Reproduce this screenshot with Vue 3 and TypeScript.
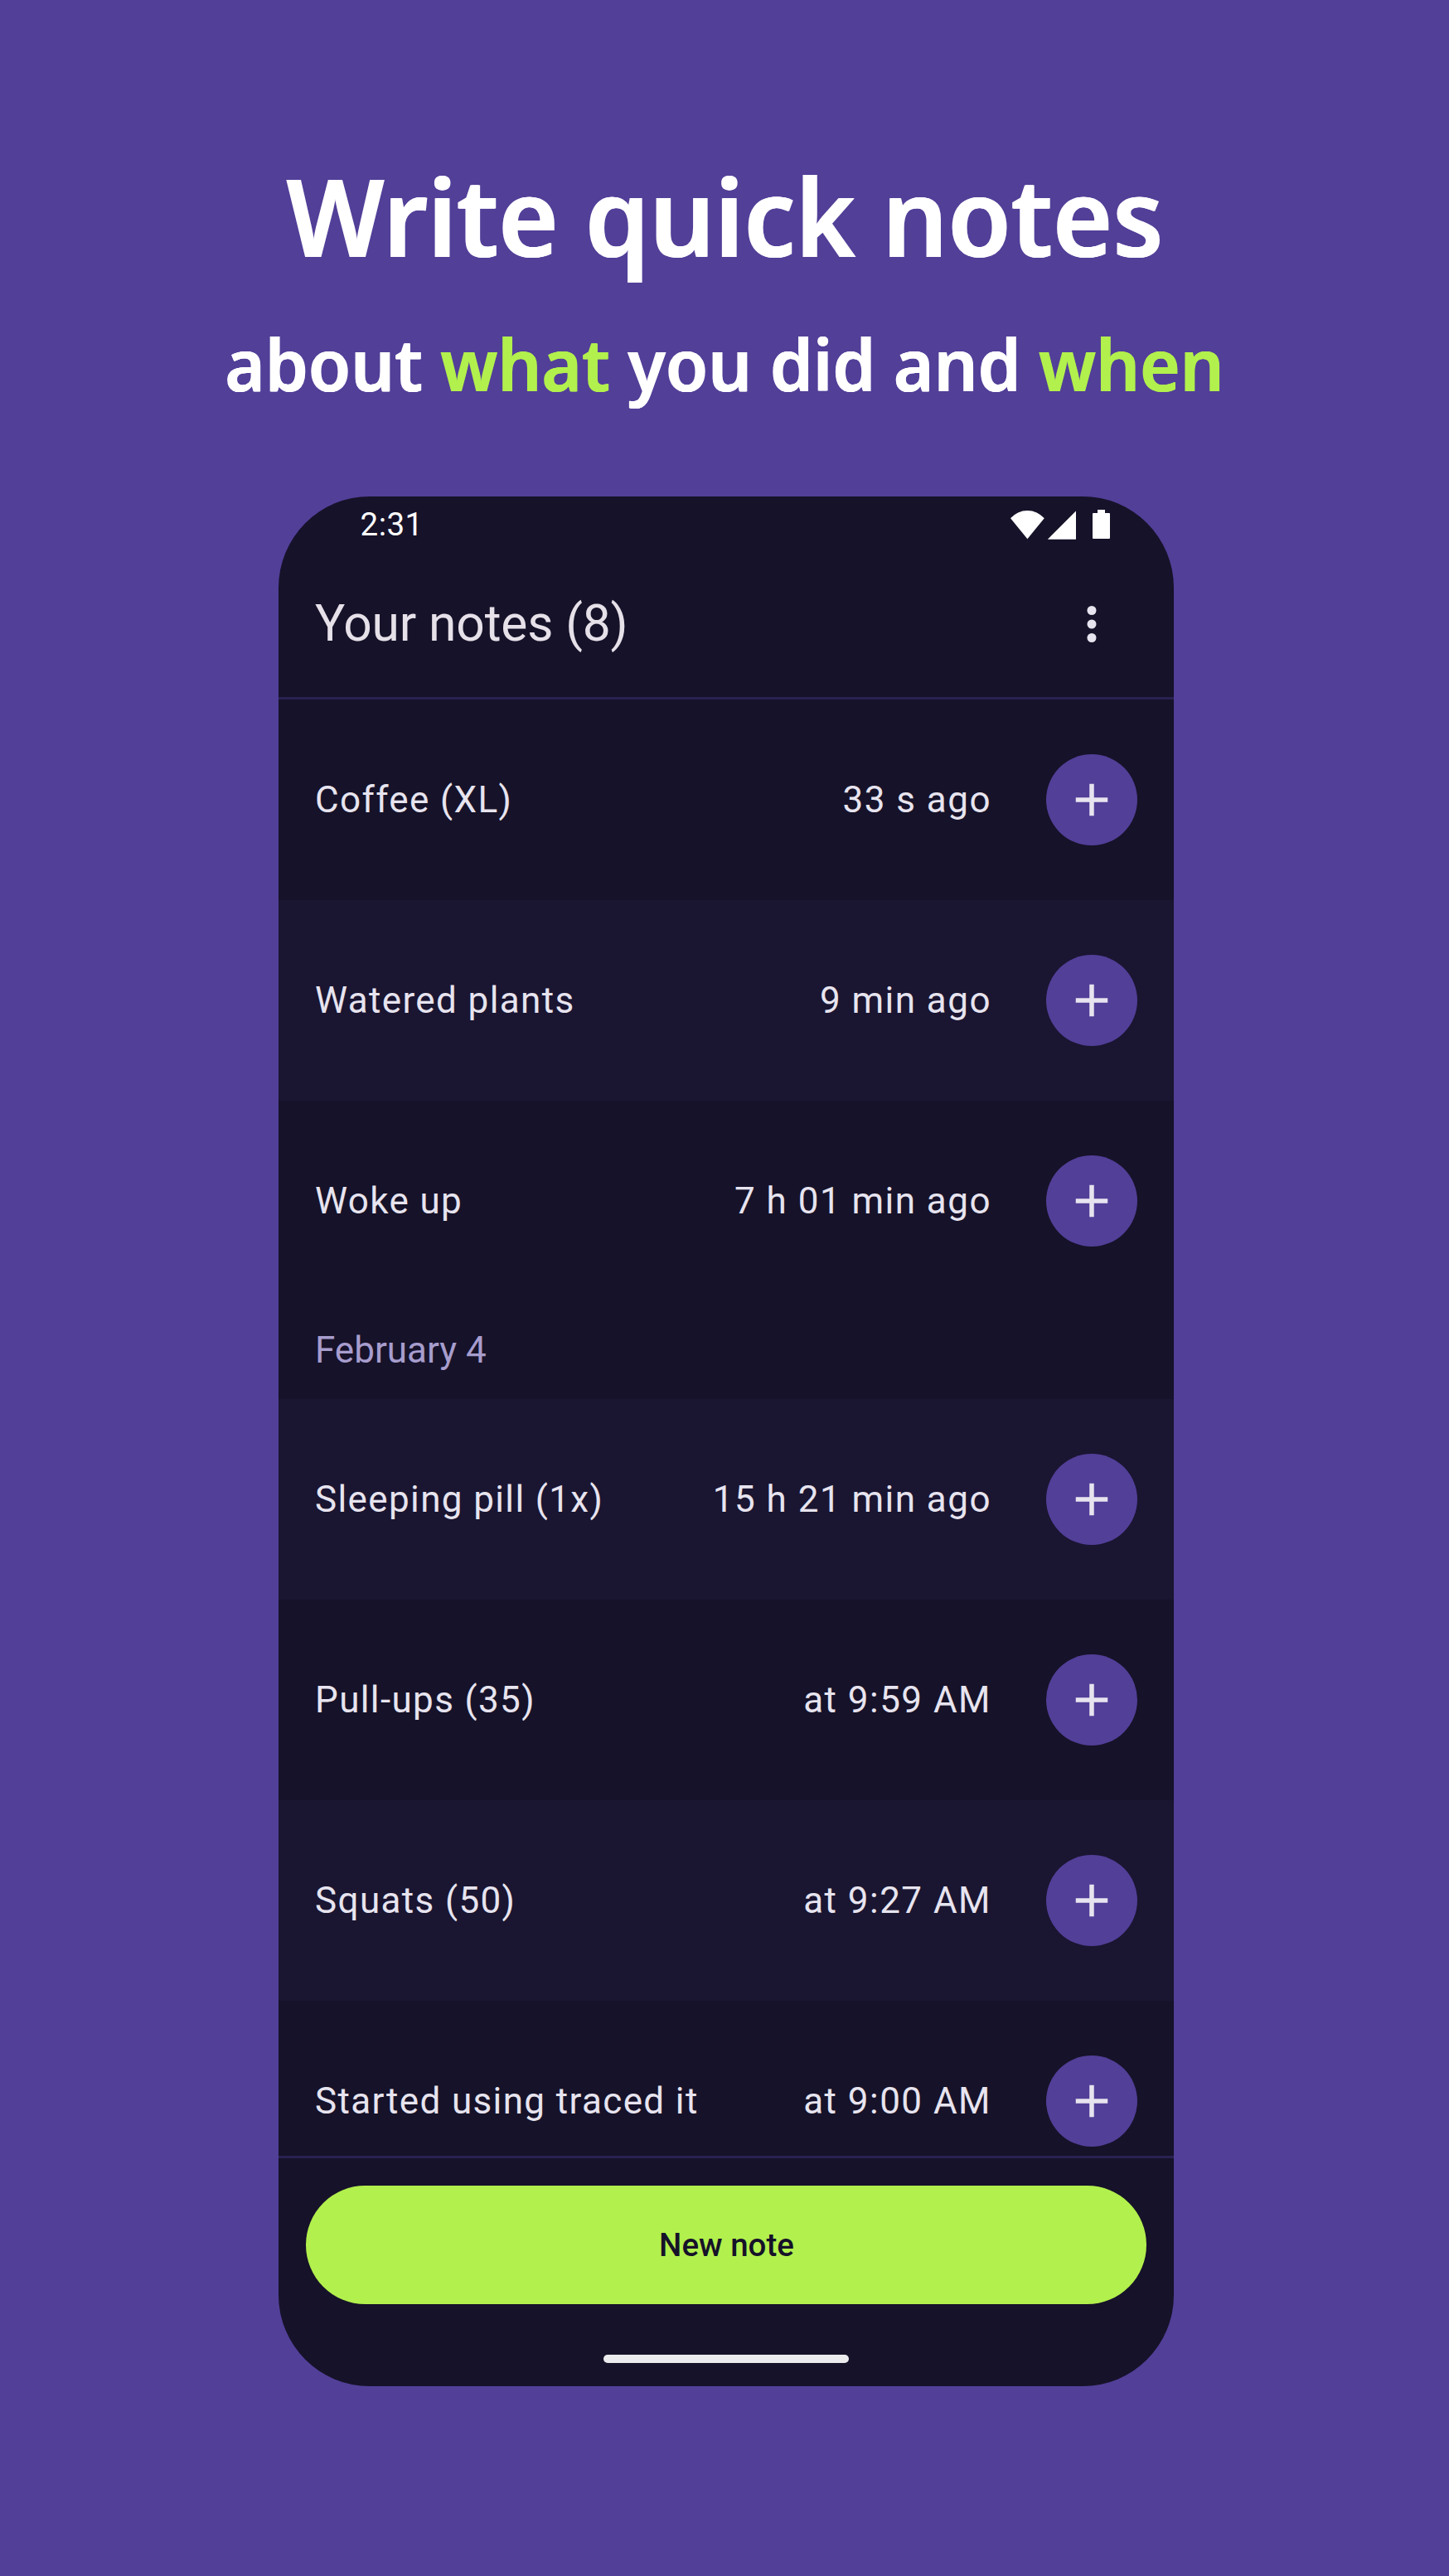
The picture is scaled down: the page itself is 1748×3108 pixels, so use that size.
<script setup lang="ts">
interface Note {
  title: string
  time: string
}

interface Group {
  label: string
  notes: Note[]
}

const groups: Group[] = [
  {
    label: '',
    notes: [
      { title: 'Coffee (XL)', time: '33 s ago' },
      { title: 'Watered plants', time: '9 min ago' },
      { title: 'Woke up', time: '7 h 01 min ago' },
    ],
  },
  {
    label: 'February 4',
    notes: [
      { title: 'Sleeping pill (1x)', time: '15 h 21 min ago' },
      { title: 'Pull-ups (35)', time: 'at 9:59 AM' },
      { title: 'Squats (50)', time: 'at 9:27 AM' },
      { title: 'Started using traced it', time: 'at 9:00 AM' },
    ],
  },
]

// Row shading alternates across the whole list, ignoring group headers.
const isShaded = (group: number, index: number): boolean => {
  const before = groups.slice(0, group).reduce((sum, g) => sum + g.notes.length, 0)
  return (before + index) % 2 === 1
}
</script>

<template>
  <div class="poster">
    <header class="pitch">
      <h1>Write quick notes</h1>
      <h2>about <em>what</em> you did and <em>when</em></h2>
    </header>

    <section class="phone">
      <div class="status">
        <span class="clock">2:31</span>
        <svg class="status-icons" width="124" height="40" viewBox="0 0 124 40" fill="#fff">
          <path d="M1 12.3A27 27 0 0 1 41.8 12.3L21.4 37.3Z" />
          <path d="M45.8 37.7L80 3.5V37.7Z" />
          <path d="M106 2h9v4h5a1 1 0 0 1 1 1v29a1 1 0 0 1-1 1h-19a1 1 0 0 1-1-1V7a1 1 0 0 1 1-1h5Z" />
        </svg>
      </div>

      <div class="toolbar">
        <span class="title">Your notes (8)</span>
        <svg class="more" width="66" height="66" viewBox="0 0 24 24" fill="#e7e4ef">
          <circle cx="12" cy="6" r="2" />
          <circle cx="12" cy="12" r="2" />
          <circle cx="12" cy="18" r="2" />
        </svg>
      </div>

      <main class="list">
        <template v-for="(group, g) in groups" :key="g">
          <div v-if="group.label" class="date">{{ group.label }}</div>
          <div
            v-for="(note, i) in group.notes"
            :key="note.title"
            class="row"
            :class="{ shaded: isShaded(g, i) }"
          >
            <span class="name">{{ note.title }}</span>
            <span class="time">{{ note.time }}</span>
            <button class="add" type="button" aria-label="Add">
              <svg width="66" height="66" viewBox="0 0 24 24" fill="#e7e4ef">
                <path d="M19 13h-6v6h-2v-6H5v-2h6V5h2v6h6z" />
              </svg>
            </button>
          </div>
        </template>
      </main>

      <footer class="bottom">
        <button class="new-note" type="button">New note</button>
        <div class="home-bar"></div>
      </footer>
    </section>
  </div>
</template>

<style>
body {
  margin: 0;
  background: #523f98;
}
</style>

<style scoped>
.poster {
  box-sizing: border-box;
  width: 1748px;
  height: 3108px;
  overflow: hidden;
  background: #523f98;
  display: flex;
  flex-direction: column;
}

.pitch {
  height: 599px;
  padding-top: 171px;
  box-sizing: border-box;
  text-align: center;
  color: #fff;
  font-family: 'Noto Sans', sans-serif;
}

/* Semi-condensed look: narrowed face, with shadows that restore stem weight. */
h1,
h2 {
  margin: 0;
  font-weight: 600;
  white-space: nowrap;
}

h1 {
  padding-left: 1px;
  font-size: 130px;
  line-height: 177px;
  transform: scaleX(0.952);
  text-shadow: 0.95px 0 currentColor, -0.95px 0 currentColor;
}

h2 {
  margin-top: 30px;
  font-size: 87px;
  line-height: 120px;
  transform: scaleX(0.955);
}

h2,
h2 em {
  text-shadow: 0.65px 0 currentColor, -0.65px 0 currentColor;
}

em {
  font-style: normal;
  color: #b2f04d;
}

.phone {
  width: 1080px;
  height: 2280px;
  margin-left: 336px;
  border-radius: 110px;
  overflow: hidden;
  background: #161229;
  color: #e7e4ef;
  font-family: Roboto, sans-serif;
  display: flex;
  flex-direction: column;
}

.status {
  height: 66px;
  box-sizing: border-box;
  padding: 1px 74px 0 98.5px;
  display: flex;
  align-items: center;
  justify-content: space-between;
  color: #fff;
}

.clock {
  font-size: 38.5px;
  letter-spacing: 0.5px;
}

.status-icons {
  margin-top: 1px;
}

.toolbar {
  height: 179px;
  box-sizing: border-box;
  flex: none;
  padding: 0 66px 0 44px;
  border-bottom: 3px solid #292150;
  display: flex;
  align-items: center;
  justify-content: space-between;
}

.title {
  margin-bottom: 2px;
  font-size: 60.5px;
  letter-spacing: -0.15px;
  color: #e6e0e9;
}

.list {
  height: 1757px;
  flex: none;
  overflow: hidden;
}

.row {
  height: 242px;
  padding: 0 44px;
  box-sizing: border-box;
  display: flex;
  align-items: center;
  font-size: 44px;
  letter-spacing: 1.375px;
  white-space: nowrap;
}

.row.shaded {
  background: #1a1531;
}

.name {
  flex: 1;
}

.time {
  margin-right: 66px;
  letter-spacing: 1.47px;
}

.add {
  width: 110px;
  height: 110px;
  padding: 0;
  border: 0;
  border-radius: 50%;
  background: #523f98;
  display: flex;
  align-items: center;
  justify-content: center;
}

.date {
  height: 118px;
  padding-left: 44px;
  display: flex;
  align-items: center;
  font-size: 44px;
  color: #a79dcd;
}

.bottom {
  flex: 1;
  border-top: 3px solid #292150;
  padding: 33px 33px 0;
  display: flex;
  flex-direction: column;
  align-items: center;
}

.new-note {
  width: 100%;
  height: 143px;
  padding: 0 0 0 1px;
  border: 0;
  border-radius: 72px;
  background: #b2f04d;
  color: #161229;
  font: 500 38.5px Roboto, sans-serif;
}

.home-bar {
  width: 296px;
  height: 10px;
  margin-top: 61px;
  border-radius: 5px;
  background: #ececee;
}
</style>
